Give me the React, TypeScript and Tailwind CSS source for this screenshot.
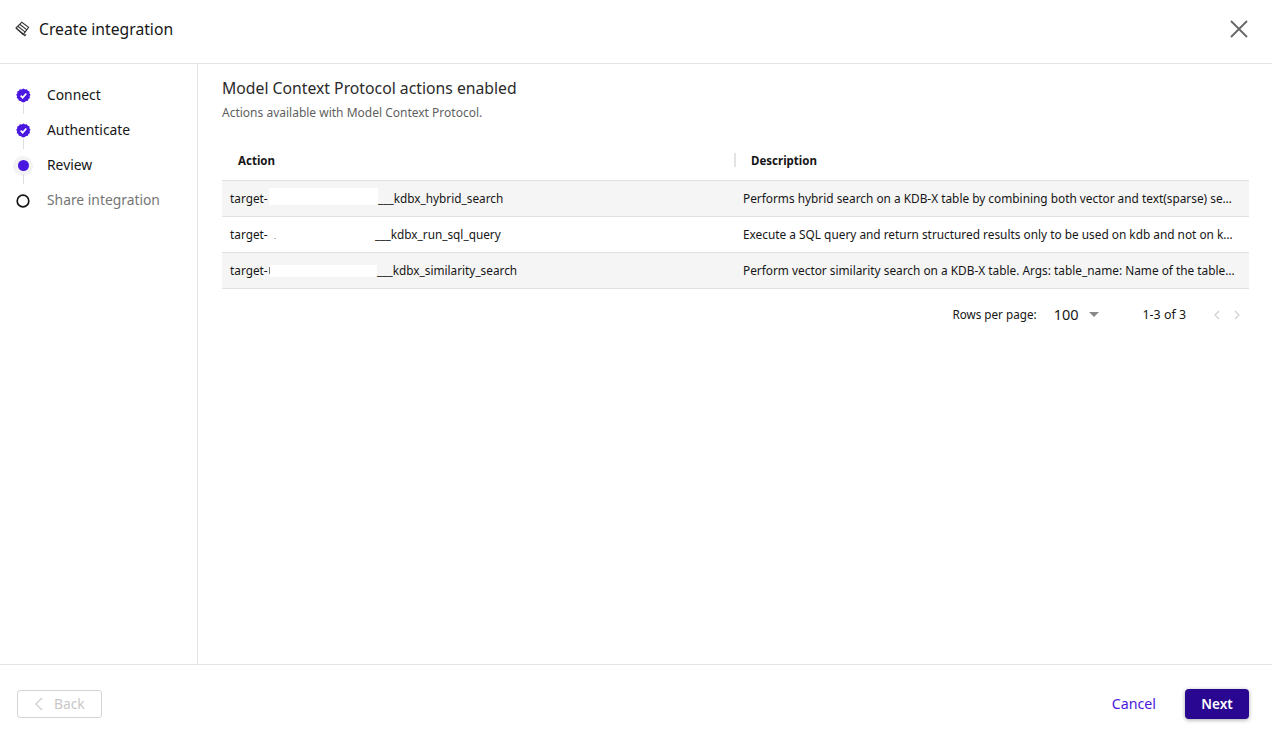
import React from "react";

const font = { fontFamily: '"Noto Sans", "Open Sans", sans-serif' };

function Check() {
  return (
    <svg width="15" height="15" viewBox="0 0 16 16">
      <path
        d="M8 .6l1.7 1 1.9-.3 1 1.6 1.8.7-.1 2 1.2 1.5-1 1.7.4 1.9-1.6 1.1-.6 1.9-1.9.1L9.3 15 8 15.4 6.4 15l-1.5-1.2-1.9-.1-.6-1.9-1.6-1.1.4-1.9-1-1.7 1.2-1.5-.1-2 1.8-.7 1-1.6 1.9.3z"
        fill="#4a17e0"
      />
      <path d="M5 8.2l2.1 2.1L11 5.9" fill="none" stroke="#fff" strokeWidth="1.8" />
    </svg>
  );
}

function Step({ label, state, last }: { label: string; state: "done" | "current" | "todo"; last?: boolean }) {
  return (
    <div className="relative flex h-[35px] items-center">
      <div className="mr-[16px] flex w-[16px] justify-center">
        {state === "done" && <Check />}
        {state === "current" && (
          <span className="flex h-[20px] w-[20px] shrink-0 items-center justify-center rounded-full bg-[#f3f3f5]">
            <span className="h-[11px] w-[11px] rounded-full bg-[#4a17e0]" />
          </span>
        )}
        {state === "todo" && (
          <svg width="14" height="14" viewBox="0 0 14 14">
            <circle cx="7" cy="7" r="5.8" fill="none" stroke="#161616" strokeWidth="1.7" />
          </svg>
        )}
      </div>
      <span className={`text-[13.85px] ${state === "todo" ? "text-[#767676]" : "text-[#161616]"}`}>{label}</span>
      {!last && <span className="absolute left-[7.5px] top-[26px] h-[10px] w-px bg-[#dedede]" />}
    </div>
  );
}

export default function App() {
  return (
    <div style={font} className="flex h-[743px] w-[1272px] flex-col bg-white text-[#161616]">
      <header className="flex h-[64px] shrink-0 items-center justify-between border-b border-[#e3e3e3] pb-[6px] pl-[15px] pr-[23px]">
        <div className="flex items-center gap-[9px]">
          <svg width="15" height="16" viewBox="0 0 15 16" fill="none" stroke="#333" strokeWidth="1.1">
            <path d="M1 7L6.8 1.2 13.6 6.4 8.2 13.6z" />
            <path d="M2.8 5.2L10 10.9M4.7 3.3L11.9 8.9M1.4 7.4L8.3 13l1.6 1.6 1.2-1.2" />
          </svg>
          <span className="text-[15.7px] leading-[20px]">Create integration</span>
        </div>
        <svg width="20" height="20" viewBox="0 0 20 20" fill="none" stroke="#666" strokeWidth="1.8">
          <path d="M2 2l16 16M18 2L2 18" />
        </svg>
      </header>

      <div className="flex min-h-0 flex-1">
        <aside className="w-[198px] shrink-0 border-r border-[#e3e3e3] pl-[15px] pt-[14px]">
          <Step label="Connect" state="done" />
          <Step label="Authenticate" state="done" />
          <Step label="Review" state="current" />
          <Step label="Share integration" state="todo" last />
        </aside>

        <main className="min-w-0 flex-1 pl-[24px] pr-[23px] pt-[14px]">
          <h1 className="text-[15.75px] font-normal leading-[21px] text-[#2a2a2a]">Model Context Protocol actions enabled</h1>
          <p className="mt-[6px] text-[12px] leading-[16px] text-[#5f5f5f]">Actions available with Model Context Protocol.</p>

          <div className="mt-[20px] flex h-[40px] items-center border-b border-[#e0e0e0] pt-[1px] text-[11.5px] font-bold">
            <div className="relative w-[514px] pl-[16px]">
              Action
              <span className="absolute right-0 top-[1px] h-[14px] w-[2px] bg-[#e3e3e3]" />
            </div>
            <div className="pl-[15px]">Description</div>
          </div>

          <div className="flex h-[36px] items-center border-b border-[#e0e0e0] bg-[#f5f5f5] text-[11.8px]">
            <div className="flex w-[513px] items-center pl-[8px]">
              <span className="w-[39px]">target-</span>
              <span className="mb-[4px] h-[17px] w-[109px] bg-white" />
              <span>___kdbx_hybrid_search</span>
            </div>
            <div className="min-w-0 flex-1 truncate pl-[8px] pr-[12px] text-[11.85px]">
              Performs hybrid search on a KDB-X table by combining both vector and text(sparse) search capabilities
            </div>
          </div>

          <div className="flex h-[36px] items-center border-b border-[#e0e0e0] bg-white text-[11.8px]">
            <div className="flex w-[513px] items-center pl-[8px]">
              <span className="w-[39px]">target-</span>
              <span className="relative h-[18px] w-[106px]">
                <span className="absolute left-[5px] top-[12px] h-px w-[2px] bg-[#bbbbbb]" />
              </span>
              <span>___kdbx_run_sql_query</span>
            </div>
            <div className="min-w-0 flex-1 truncate pl-[8px] pr-[12px] text-[11.85px]">
              Execute a SQL query and return structured results only to be used on kdb and not on kdbx environments
            </div>
          </div>

          <div className="flex h-[36px] items-center border-b border-[#e0e0e0] bg-[#f5f5f5] text-[11.8px]">
            <div className="flex w-[513px] items-center pl-[8px]">
              <span className="w-[39px]">target-</span>
              <span className="h-[7px] w-px bg-[#777777]" />
              <span className="h-[12px] w-[107px] bg-white" />
              <span>___kdbx_similarity_search</span>
            </div>
            <div className="min-w-0 flex-1 truncate pl-[8px] pr-[12px] text-[11.85px]">
              Perform vector similarity search on a KDB-X table. Args: table_name: Name of the table to search in
            </div>
          </div>

          <div className="mt-[8px] flex h-[36px] items-center justify-end pr-[8px] text-[11.7px]">
            <span>Rows per page:</span>
            <span className="ml-[17px] text-[14.5px]">100</span>
            <svg className="ml-[9px]" width="12" height="6" viewBox="0 0 12 6">
              <path d="M1 0h10L6 5z" fill="#8a8a8a" />
            </svg>
            <span className="ml-[43px] text-[12.4px]">1-3 of 3</span>
            <svg className="ml-[27px]" width="8" height="10" viewBox="0 0 8 10" fill="none" stroke="#d0d0d0" strokeWidth="1.2">
              <path d="M6 1L2 5l4 4" />
            </svg>
            <svg className="ml-[12px]" width="8" height="10" viewBox="0 0 8 10" fill="none" stroke="#d0d0d0" strokeWidth="1.2">
              <path d="M2 1l4 4-4 4" />
            </svg>
          </div>
        </main>
      </div>

      <footer className="flex h-[79px] shrink-0 items-center justify-between border-t border-[#e3e3e3] pl-[17px] pr-[23px]">
        <button className="flex h-[28px] w-[85px] items-center rounded-[3px] border border-[#d4d4d4] pl-[16px] text-[13.8px] text-[#c8c8c8]">
          <svg width="9" height="14" viewBox="0 0 9 14" fill="none" stroke="#cfcfcf" strokeWidth="1.3">
            <path d="M8 1L2 7l6 6" />
          </svg>
          <span className="ml-[11px]">Back</span>
        </button>
        <div className="flex items-center">
          <button className="text-[14.2px] text-[#4a17e0]">Cancel</button>
          <button className="ml-[29px] h-[30px] w-[64px] rounded-[4px] bg-[#2a0791] text-[13.5px] font-semibold text-white shadow-[0_1px_4px_rgba(0,0,0,0.35)]">
            Next
          </button>
        </div>
      </footer>
    </div>
  );
}
